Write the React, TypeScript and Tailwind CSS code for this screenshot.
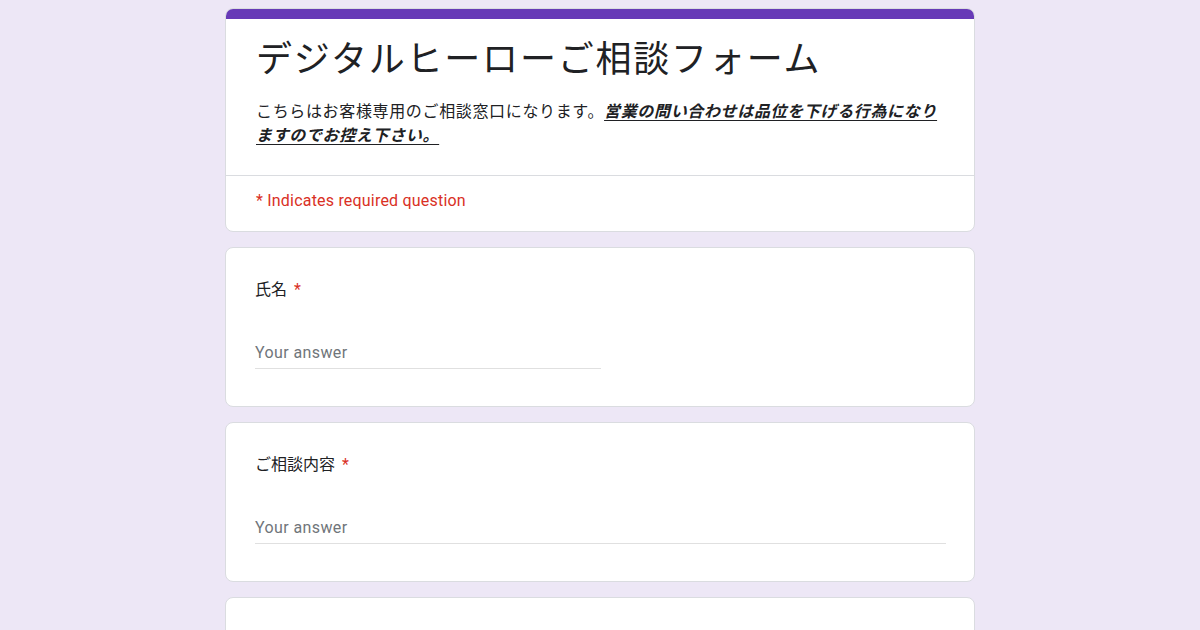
import React from 'react';

const jp = { fontFamily: '"Noto Sans CJK JP", "Noto Sans", sans-serif' };
const latin = { fontFamily: 'Roboto, "Noto Sans CJK JP", sans-serif' };

interface QuestionProps {
  label: string;
  half?: boolean;
}

const Question: React.FC<QuestionProps> = ({ label, half }) => (
  <div className="bg-white border border-[#dadce0] rounded-lg pl-[29px] pr-[28px] pt-[28px] pb-[37px]">
    <div className="text-[16px] text-[#202124] leading-6" style={jp}>
      {label}
      <span className="text-[#d93025] ml-[7px]" style={latin}>*</span>
    </div>
    <div className={`mt-[39px] ${half ? 'w-1/2' : 'w-full'}`}>
      <div className="text-[16px] text-[#70757a] leading-6 pb-[3px] tracking-[0.4px]" style={latin}>
        Your answer
      </div>
      <div className="h-px bg-[#e0e0e0]" />
    </div>
  </div>
);

export default function App() {
  return (
    <div className="w-[1200px] h-[630px] overflow-hidden bg-[#ede7f6]">
      <div className="w-[750px] mx-auto pt-2 flex flex-col gap-[15px]">
        <div className="bg-white border border-[#dadce0] rounded-lg overflow-hidden">
          <div className="h-[11px] bg-[#673ab7] -mx-px -mt-px" />
          <div className="px-[30px] pt-[11px] pb-[29px]">
            <h1 className="text-[36px] leading-[52px] text-[#202124] tracking-[1.8px]" style={jp}>
              デジタルヒーローご相談フォーム
            </h1>
            <p className="mt-[16px] text-[16px] leading-[24px] text-[#202124] tracking-[0.65px]" style={jp}>
              こちらはお客様専用のご相談窓口になります。
              <b className="italic underline underline-offset-[3px]">
                営業の問い合わせは品位を下げる行為になり
                <br />
                ますのでお控え下さい。
              </b>
            </p>
          </div>
          <div className="border-t border-[#dadce0] px-[30px] pt-[15px] pb-[20px]">
            <div className="text-[16px] leading-5 text-[#d93025] tracking-[0.2px]" style={latin}>
              * Indicates required question
            </div>
          </div>
        </div>
        <Question label="氏名" half />
        <Question label="ご相談内容" />
        <Question label="メールアドレス" />
      </div>
    </div>
  );
}
